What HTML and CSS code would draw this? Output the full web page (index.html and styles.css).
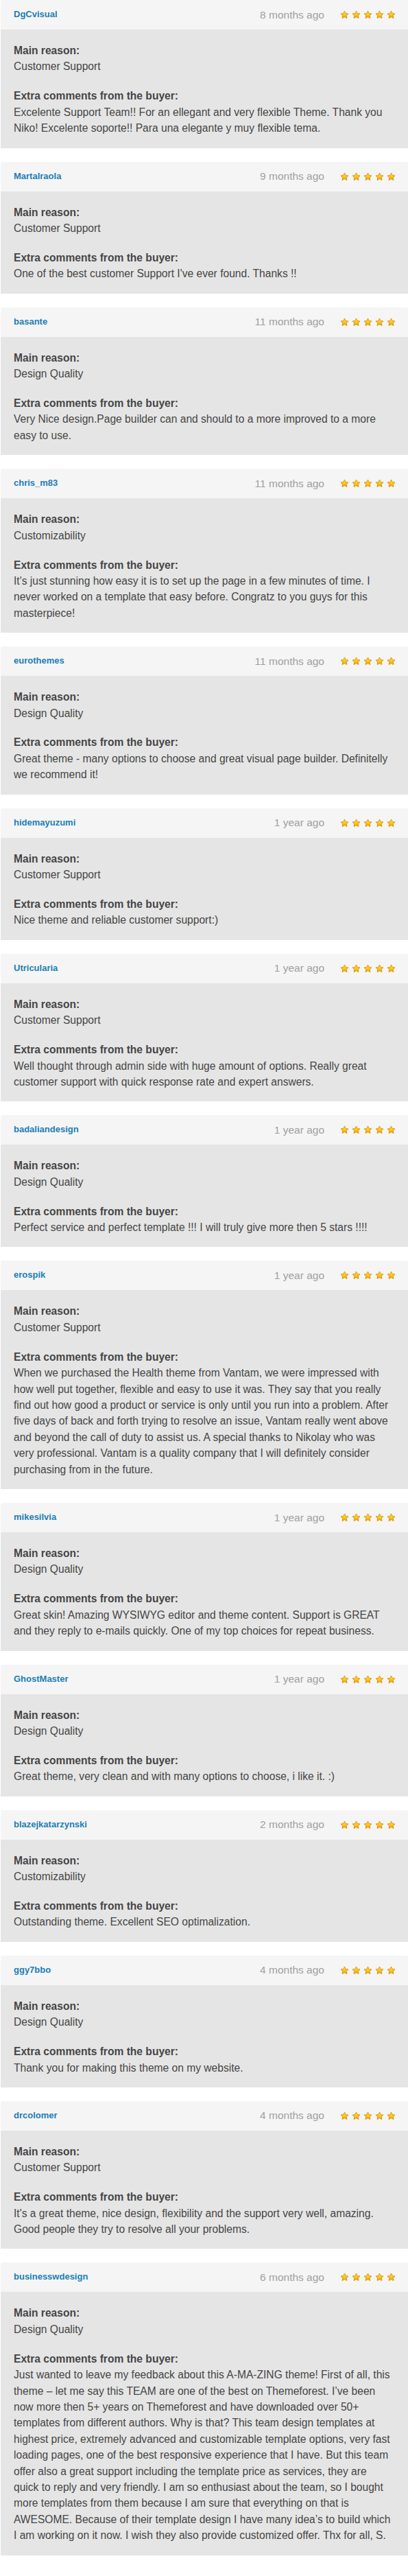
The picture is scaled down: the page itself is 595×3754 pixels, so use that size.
FILE: index.html
```html
<!DOCTYPE html>
<html lang="en">
<head>
<meta charset="utf-8">
<title>Reviews</title>
<link rel="stylesheet" href="styles.css">
</head>
<body>
<svg width="0" height="0" class="defs" aria-hidden="true">
  <defs>
    <linearGradient id="sg" x1="0" y1="0" x2="0" y2="1">
      <stop offset="0" stop-color="#ffe45a"/>
      <stop offset="0.55" stop-color="#fcc419"/>
      <stop offset="1" stop-color="#f0a400"/>
    </linearGradient>
    <symbol id="star" viewBox="0 0 24 24">
      <path d="M12 1.8l3.1 6.6 7.1.9-5.2 4.9 1.3 7.1L12 17.8l-6.3 3.5 1.3-7.1-5.2-4.9 7.1-.9z" fill="url(#sg)" stroke="#d98a00" stroke-width="1.6" stroke-linejoin="round"/>
    </symbol>
  </defs>
</svg>

<div class="reviews">

  <div class="card">
    <div class="head"><a class="name">DgCvisual</a><span class="date">8 months ago</span><span class="stars"><svg><use href="#star"/></svg><svg><use href="#star"/></svg><svg><use href="#star"/></svg><svg><use href="#star"/></svg><svg><use href="#star"/></svg></span></div>
    <div class="body">
      <p><b>Main reason:</b><br>Customer Support</p>
      <p><b>Extra comments from the buyer:</b><br>Excelente Support Team!! For an ellegant and very flexible Theme. Thank you<br>Niko! Excelente soporte!! Para una elegante y muy flexible tema.</p>
    </div>
  </div>

  <div class="card">
    <div class="head"><a class="name">MartaIraola</a><span class="date">9 months ago</span><span class="stars"><svg><use href="#star"/></svg><svg><use href="#star"/></svg><svg><use href="#star"/></svg><svg><use href="#star"/></svg><svg><use href="#star"/></svg></span></div>
    <div class="body">
      <p><b>Main reason:</b><br>Customer Support</p>
      <p><b>Extra comments from the buyer:</b><br>One of the best customer Support I've ever found. Thanks !!</p>
    </div>
  </div>

  <div class="card">
    <div class="head"><a class="name">basante</a><span class="date">11 months ago</span><span class="stars"><svg><use href="#star"/></svg><svg><use href="#star"/></svg><svg><use href="#star"/></svg><svg><use href="#star"/></svg><svg><use href="#star"/></svg></span></div>
    <div class="body">
      <p><b>Main reason:</b><br>Design Quality</p>
      <p><b>Extra comments from the buyer:</b><br>Very Nice design.Page builder can and should to a more improved to a more<br>easy to use.</p>
    </div>
  </div>

  <div class="card">
    <div class="head"><a class="name">chris_m83</a><span class="date">11 months ago</span><span class="stars"><svg><use href="#star"/></svg><svg><use href="#star"/></svg><svg><use href="#star"/></svg><svg><use href="#star"/></svg><svg><use href="#star"/></svg></span></div>
    <div class="body">
      <p><b>Main reason:</b><br>Customizability</p>
      <p><b>Extra comments from the buyer:</b><br>It's just stunning how easy it is to set up the page in a few minutes of time. I<br>never worked on a template that easy before. Congratz to you guys for this<br>masterpiece!</p>
    </div>
  </div>

  <div class="card">
    <div class="head"><a class="name">eurothemes</a><span class="date">11 months ago</span><span class="stars"><svg><use href="#star"/></svg><svg><use href="#star"/></svg><svg><use href="#star"/></svg><svg><use href="#star"/></svg><svg><use href="#star"/></svg></span></div>
    <div class="body">
      <p><b>Main reason:</b><br>Design Quality</p>
      <p><b>Extra comments from the buyer:</b><br>Great theme - many options to choose and great visual page builder. Definitelly<br>we recommend it!</p>
    </div>
  </div>

  <div class="card">
    <div class="head"><a class="name">hidemayuzumi</a><span class="date">1 year ago</span><span class="stars"><svg><use href="#star"/></svg><svg><use href="#star"/></svg><svg><use href="#star"/></svg><svg><use href="#star"/></svg><svg><use href="#star"/></svg></span></div>
    <div class="body">
      <p><b>Main reason:</b><br>Customer Support</p>
      <p><b>Extra comments from the buyer:</b><br>Nice theme and reliable customer support:)</p>
    </div>
  </div>

  <div class="card">
    <div class="head"><a class="name">Utricularia</a><span class="date">1 year ago</span><span class="stars"><svg><use href="#star"/></svg><svg><use href="#star"/></svg><svg><use href="#star"/></svg><svg><use href="#star"/></svg><svg><use href="#star"/></svg></span></div>
    <div class="body">
      <p><b>Main reason:</b><br>Customer Support</p>
      <p><b>Extra comments from the buyer:</b><br>Well thought through admin side with huge amount of options. Really great<br>customer support with quick response rate and expert answers.</p>
    </div>
  </div>

  <div class="card">
    <div class="head"><a class="name">badaliandesign</a><span class="date">1 year ago</span><span class="stars"><svg><use href="#star"/></svg><svg><use href="#star"/></svg><svg><use href="#star"/></svg><svg><use href="#star"/></svg><svg><use href="#star"/></svg></span></div>
    <div class="body">
      <p><b>Main reason:</b><br>Design Quality</p>
      <p><b>Extra comments from the buyer:</b><br>Perfect service and perfect template !!! I will truly give more then 5 stars !!!!</p>
    </div>
  </div>

  <div class="card">
    <div class="head"><a class="name">erospik</a><span class="date">1 year ago</span><span class="stars"><svg><use href="#star"/></svg><svg><use href="#star"/></svg><svg><use href="#star"/></svg><svg><use href="#star"/></svg><svg><use href="#star"/></svg></span></div>
    <div class="body">
      <p><b>Main reason:</b><br>Customer Support</p>
      <p><b>Extra comments from the buyer:</b><br>When we purchased the Health theme from Vantam, we were impressed with<br>how well put together, flexible and easy to use it was. They say that you really<br>find out how good a product or service is only until you run into a problem. After<br>five days of back and forth trying to resolve an issue, Vantam really went above<br>and beyond the call of duty to assist us. A special thanks to Nikolay who was<br>very professional. Vantam is a quality company that I will definitely consider<br>purchasing from in the future.</p>
    </div>
  </div>

  <div class="card">
    <div class="head"><a class="name">mikesilvia</a><span class="date">1 year ago</span><span class="stars"><svg><use href="#star"/></svg><svg><use href="#star"/></svg><svg><use href="#star"/></svg><svg><use href="#star"/></svg><svg><use href="#star"/></svg></span></div>
    <div class="body">
      <p><b>Main reason:</b><br>Design Quality</p>
      <p><b>Extra comments from the buyer:</b><br>Great skin! Amazing WYSIWYG editor and theme content. Support is GREAT<br>and they reply to e-mails quickly. One of my top choices for repeat business.</p>
    </div>
  </div>

  <div class="card">
    <div class="head"><a class="name">GhostMaster</a><span class="date">1 year ago</span><span class="stars"><svg><use href="#star"/></svg><svg><use href="#star"/></svg><svg><use href="#star"/></svg><svg><use href="#star"/></svg><svg><use href="#star"/></svg></span></div>
    <div class="body">
      <p><b>Main reason:</b><br>Design Quality</p>
      <p><b>Extra comments from the buyer:</b><br>Great theme, very clean and with many options to choose, i like it. :)</p>
    </div>
  </div>

  <div class="card">
    <div class="head"><a class="name">blazejkatarzynski</a><span class="date">2 months ago</span><span class="stars"><svg><use href="#star"/></svg><svg><use href="#star"/></svg><svg><use href="#star"/></svg><svg><use href="#star"/></svg><svg><use href="#star"/></svg></span></div>
    <div class="body">
      <p><b>Main reason:</b><br>Customizability</p>
      <p><b>Extra comments from the buyer:</b><br>Outstanding theme. Excellent SEO optimalization.</p>
    </div>
  </div>

  <div class="card">
    <div class="head"><a class="name">ggy7bbo</a><span class="date">4 months ago</span><span class="stars"><svg><use href="#star"/></svg><svg><use href="#star"/></svg><svg><use href="#star"/></svg><svg><use href="#star"/></svg><svg><use href="#star"/></svg></span></div>
    <div class="body">
      <p><b>Main reason:</b><br>Design Quality</p>
      <p><b>Extra comments from the buyer:</b><br>Thank you for making this theme on my website.</p>
    </div>
  </div>

  <div class="card">
    <div class="head"><a class="name">drcolomer</a><span class="date">4 months ago</span><span class="stars"><svg><use href="#star"/></svg><svg><use href="#star"/></svg><svg><use href="#star"/></svg><svg><use href="#star"/></svg><svg><use href="#star"/></svg></span></div>
    <div class="body">
      <p><b>Main reason:</b><br>Customer Support</p>
      <p><b>Extra comments from the buyer:</b><br>It's a great theme, nice design, flexibility and the support very well, amazing.<br>Good people they try to resolve all your problems.</p>
    </div>
  </div>

  <div class="card">
    <div class="head"><a class="name">businesswdesign</a><span class="date">6 months ago</span><span class="stars"><svg><use href="#star"/></svg><svg><use href="#star"/></svg><svg><use href="#star"/></svg><svg><use href="#star"/></svg><svg><use href="#star"/></svg></span></div>
    <div class="body">
      <p><b>Main reason:</b><br>Design Quality</p>
      <p><b>Extra comments from the buyer:</b><br>Just wanted to leave my feedback about this A-MA-ZING theme! First of all, this<br>theme – let me say this TEAM are one of the best on Themeforest. I’ve been<br>now more then 5+ years on Themeforest and have downloaded over 50+<br>templates from different authors. Why is that? This team design templates at<br>highest price, extremely advanced and customizable template options, very fast<br>loading pages, one of the best responsive experience that I have. But this team<br>offer also a great support including the template price as services, they are<br>quick to reply and very friendly. I am so enthusiast about the team, so I bought<br>more templates from them because I am sure that everything on that is<br>AWESOME. Because of their template design I have many idea’s to build which<br>I am working on it now. I wish they also provide customized offer. Thx for all, S.</p>
    </div>
  </div>

</div>
</body>
</html>
```
FILE: styles.css
```css
html, body {
  margin: 0;
  padding: 0;
  background: #ffffff;
}

body {
  font-family: "Liberation Sans", Arial, Helvetica, sans-serif;
  color: #454545;
}

.defs {
  position: absolute;
  width: 0;
  height: 0;
  overflow: hidden;
}

.reviews {
  display: flex;
  flex-direction: column;
  gap: 20px;
  padding-left: 1px;
}

.card {
  display: flex;
  flex-direction: column;
}

.head {
  display: flex;
  align-items: center;
  height: 43px;
  padding: 0 18px 0 19px;
  background: #f5f5f5;
  border-radius: 3px 3px 0 0;
}

.name {
  font-size: 13px;
  font-weight: bold;
  color: #1c7eb6;
  text-decoration: none;
  margin-top: -2px;
}

.date {
  margin-left: auto;
  font-size: 15.5px;
  color: #a0a0a0;
  margin-right: 23px;
}

.stars {
  display: flex;
  gap: 4px;
}

.stars svg {
  width: 13px;
  height: 13px;
  display: block;
}

.body {
  background: #e5e5e5;
  padding: 19px 4px 17px 19px;
  font-size: 15.6px;
  line-height: 23.4px;
}

.body p {
  margin: 0;
}

.body p + p {
  margin-top: 19.5px;
}

.body b {
  color: #454545;
}
```
